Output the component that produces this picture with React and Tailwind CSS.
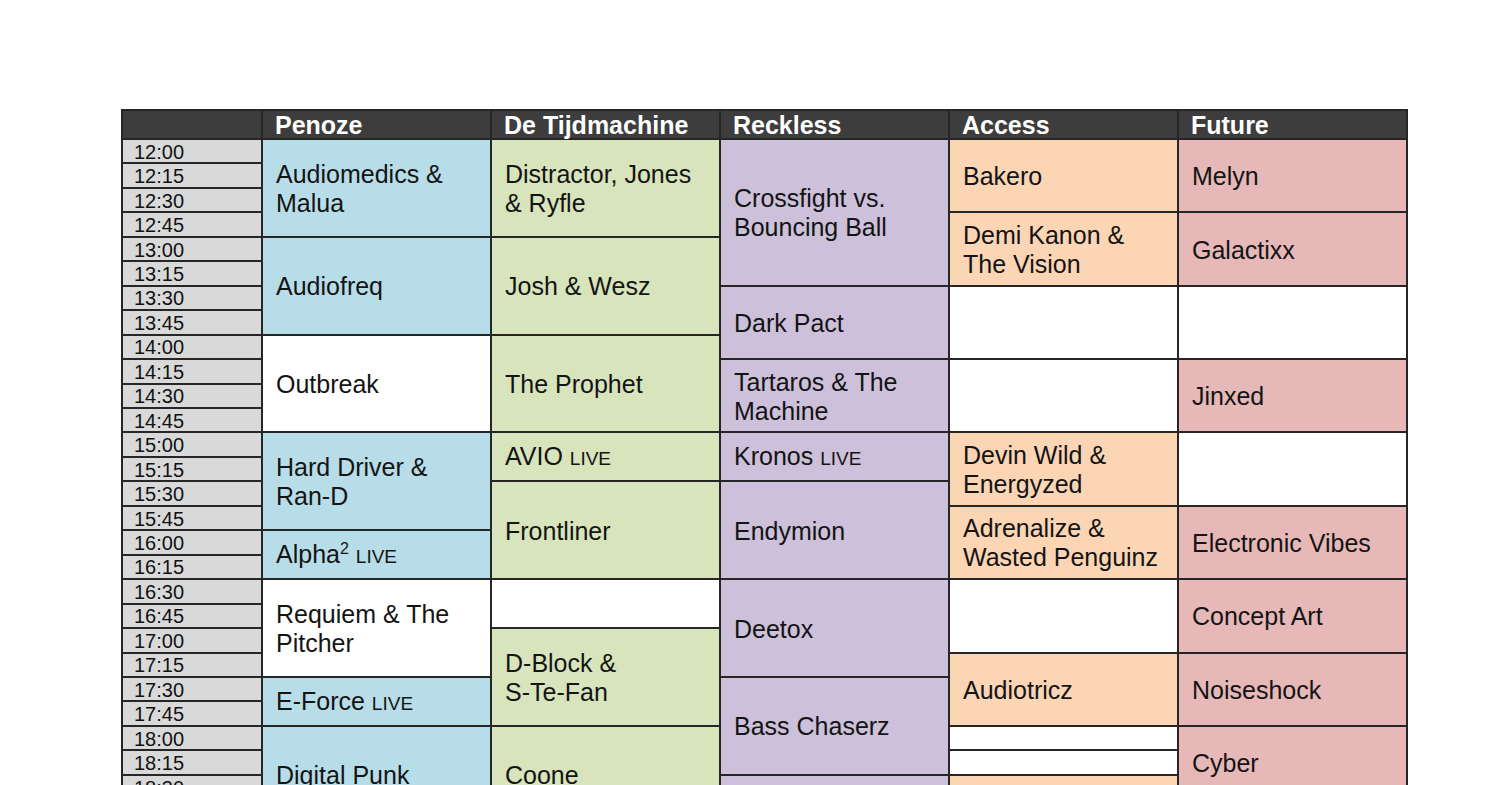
import React from "react";

const BG = {
  blue: "bg-[#b7dde8]",
  green: "bg-[#d7e4bc]",
  purple: "bg-[#ccc0da]",
  orange: "bg-[#fcd5b4]",
  pink: "bg-[#e6b8b7]",
  white: "bg-white",
};

const Live = () => <span className="text-[19px]">LIVE</span>;

const cells = [
  // Penoze
  { pos: "col-start-2 row-start-2 row-span-4", c: "blue", t: ["Audiomedics &", "Malua"] },
  { pos: "col-start-2 row-start-6 row-span-4", c: "blue", t: ["Audiofreq"] },
  { pos: "col-start-2 row-start-10 row-span-4", c: "white", t: ["Outbreak"] },
  { pos: "col-start-2 row-start-14 row-span-4", c: "blue", t: ["Hard Driver &", "Ran-D"] },
  {
    pos: "col-start-2 row-start-18 row-span-2",
    c: "blue",
    node: (
      <span>
        Alpha<sup className="text-[16px] -top-[9px]">2</sup> <Live />
      </span>
    ),
  },
  { pos: "col-start-2 row-start-20 row-span-4", c: "white", t: ["Requiem & The", "Pitcher"] },
  {
    pos: "col-start-2 row-start-24 row-span-2",
    c: "blue",
    node: (
      <span>
        E-Force <Live />
      </span>
    ),
  },
  { pos: "col-start-2 row-start-26 row-span-4", c: "blue", t: ["Digital Punk"] },
  { pos: "col-start-2 row-start-30 row-span-2", c: "white", t: [] },

  // De Tijdmachine
  { pos: "col-start-3 row-start-2 row-span-4", c: "green", t: ["Distractor, Jones", "& Ryfle"] },
  { pos: "col-start-3 row-start-6 row-span-4", c: "green", t: ["Josh & Wesz"] },
  { pos: "col-start-3 row-start-10 row-span-4", c: "green", t: ["The Prophet"] },
  {
    pos: "col-start-3 row-start-14 row-span-2",
    c: "green",
    node: (
      <span>
        AVIO <Live />
      </span>
    ),
  },
  { pos: "col-start-3 row-start-16 row-span-4", c: "green", t: ["Frontliner"] },
  { pos: "col-start-3 row-start-20 row-span-2", c: "white", t: [] },
  { pos: "col-start-3 row-start-22 row-span-4", c: "green", t: ["D-Block &", "S-Te-Fan"] },
  { pos: "col-start-3 row-start-26 row-span-4", c: "green", t: ["Coone"] },
  { pos: "col-start-3 row-start-30 row-span-2", c: "white", t: [] },

  // Reckless
  { pos: "col-start-4 row-start-2 row-span-6", c: "purple", t: ["Crossfight vs.", "Bouncing Ball"] },
  { pos: "col-start-4 row-start-8 row-span-3", c: "purple", t: ["Dark Pact"] },
  { pos: "col-start-4 row-start-11 row-span-3", c: "purple", t: ["Tartaros & The", "Machine"] },
  {
    pos: "col-start-4 row-start-14 row-span-2",
    c: "purple",
    node: (
      <span>
        Kronos <Live />
      </span>
    ),
  },
  { pos: "col-start-4 row-start-16 row-span-4", c: "purple", t: ["Endymion"] },
  { pos: "col-start-4 row-start-20 row-span-4", c: "purple", t: ["Deetox"] },
  { pos: "col-start-4 row-start-24 row-span-4", c: "purple", t: ["Bass Chaserz"] },
  { pos: "col-start-4 row-start-28 row-span-4", c: "purple", t: [] },

  // Access
  { pos: "col-start-5 row-start-2 row-span-3", c: "orange", t: ["Bakero"] },
  { pos: "col-start-5 row-start-5 row-span-3", c: "orange", t: ["Demi Kanon &", "The Vision"] },
  { pos: "col-start-5 row-start-8 row-span-3", c: "white", t: [] },
  { pos: "col-start-5 row-start-11 row-span-3", c: "white", t: [] },
  { pos: "col-start-5 row-start-14 row-span-3", c: "orange", t: ["Devin Wild &", "Energyzed"] },
  { pos: "col-start-5 row-start-17 row-span-3", c: "orange", t: ["Adrenalize &", "Wasted Penguinz"] },
  { pos: "col-start-5 row-start-20 row-span-3", c: "white", t: [] },
  { pos: "col-start-5 row-start-23 row-span-3", c: "orange", t: ["Audiotricz"] },
  { pos: "col-start-5 row-start-26 row-span-1", c: "white", t: [] },
  { pos: "col-start-5 row-start-27 row-span-1", c: "white", t: [] },
  { pos: "col-start-5 row-start-28 row-span-3", c: "orange", t: [] },
  { pos: "col-start-5 row-start-31 row-span-1", c: "white", t: [] },

  // Future
  { pos: "col-start-6 row-start-2 row-span-3", c: "pink", t: ["Melyn"] },
  { pos: "col-start-6 row-start-5 row-span-3", c: "pink", t: ["Galactixx"] },
  { pos: "col-start-6 row-start-8 row-span-3", c: "white", t: [] },
  { pos: "col-start-6 row-start-11 row-span-3", c: "pink", t: ["Jinxed"] },
  { pos: "col-start-6 row-start-14 row-span-3", c: "white", t: [] },
  { pos: "col-start-6 row-start-17 row-span-3", c: "pink", t: ["Electronic Vibes"] },
  { pos: "col-start-6 row-start-20 row-span-3", c: "pink", t: ["Concept Art"] },
  { pos: "col-start-6 row-start-23 row-span-3", c: "pink", t: ["Noiseshock"] },
  { pos: "col-start-6 row-start-26 row-span-3", c: "pink", t: ["Cyber"] },
  { pos: "col-start-6 row-start-29 row-span-3", c: "pink", t: [] },
];

const headers = [
  { pos: "col-start-1 row-start-1", t: "" },
  { pos: "col-start-2 row-start-1", t: "Penoze" },
  { pos: "col-start-3 row-start-1", t: "De Tijdmachine" },
  { pos: "col-start-4 row-start-1", t: "Reckless" },
  { pos: "col-start-5 row-start-1", t: "Access" },
  { pos: "col-start-6 row-start-1", t: "Future" },
];

const times = Array.from({ length: 30 }, (_, i) => {
  const h = 12 + Math.floor(i / 4);
  const m = (i % 4) * 15;
  return `${h}:${m === 0 ? "00" : m}`;
});

export default function App() {
  return (
    <div className="w-[1500px] h-[785px] overflow-hidden bg-white pt-[109px] pl-[121px] font-['Liberation_Sans',Arial,sans-serif]">
      <div className="grid w-fit bg-[#262626] p-[2px] gap-[2px] grid-cols-[138px_repeat(5,227px)] grid-rows-[27px_repeat(30,22.46px)]">
        {headers.map((h, i) => (
          <div
            key={i}
            className={`${h.pos} bg-[#3d3d3d] flex items-center pl-[12px] pt-[2px] text-[25px] leading-none font-bold text-white whitespace-nowrap`}
          >
            {h.t}
          </div>
        ))}

        <div className="col-start-1 row-start-2 row-span-30 flex flex-col gap-[2px]">
          {times.map((t) => (
            <div
              key={t}
              className="h-[22.46px] shrink-0 bg-[#d9d9d9] flex items-center pl-[11px] pt-[1px] text-[20px] leading-none text-[#111]"
            >
              {t}
            </div>
          ))}
        </div>

        {cells.map((c, i) => (
          <div
            key={i}
            className={`${c.pos} ${BG[c.c]} flex items-center pl-[13px] pt-[2px] text-[25px] leading-[29px] text-[#141414] whitespace-nowrap overflow-hidden`}
          >
            {c.node ? (
              c.node
            ) : (
              <div>
                {c.t.map((l, j) => (
                  <div key={j}>{l}</div>
                ))}
              </div>
            )}
          </div>
        ))}
      </div>
    </div>
  );
}
